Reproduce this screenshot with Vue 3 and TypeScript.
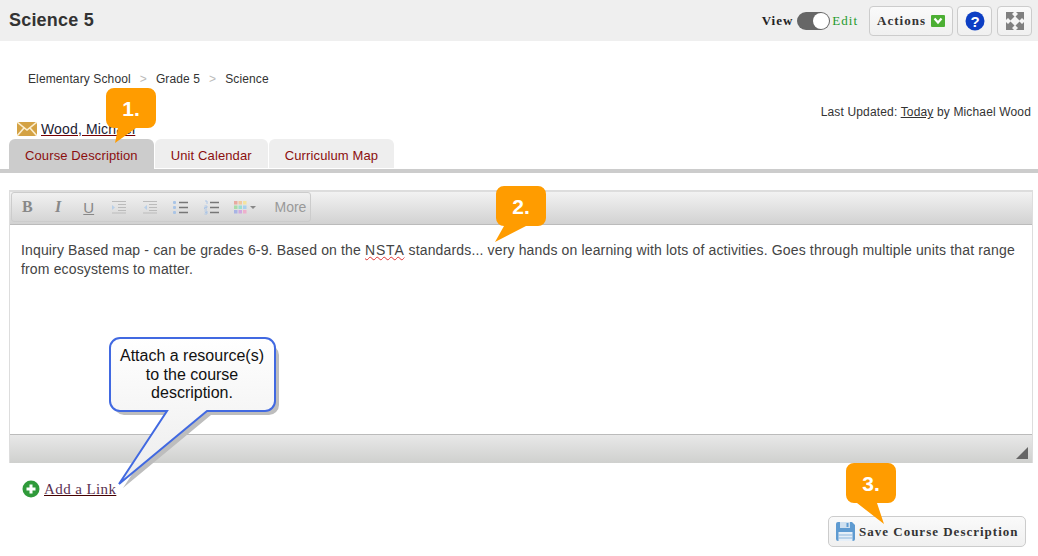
<script setup lang="ts">
const crumbs = ['Elementary School', 'Grade 5', 'Science']
const tabs = ['Course Description', 'Unit Calendar', 'Curriculum Map']
</script>

<template>
  <div class="page">
    <header class="topbar">
      <h1 class="title">Science 5</h1>
      <div class="controls">
        <span class="view-label">View</span>
        <span class="toggle"><span class="knob" /></span>
        <span class="edit-label">Edit</span>
        <button class="btn actions">
          Actions
          <svg width="14" height="12" viewBox="0 0 14 12">
            <rect width="14" height="12" rx="1" fill="#4caf33" />
            <path d="M3.5 3.5 7 7.5l3.5-4" fill="none" stroke="#fff" stroke-width="2.2" />
          </svg>
        </button>
        <button class="btn square">
          <svg width="20" height="20" viewBox="0 0 20 20">
            <circle cx="10" cy="10" r="9.5" fill="#0d3fc4" />
            <text x="10" y="15.5" class="help-mark" text-anchor="middle">?</text>
          </svg>
        </button>
        <button class="btn square expand">
          <svg width="18" height="18" viewBox="0 0 18 18" fill="#808080">
            <path d="M0 0h8L6 2l2.5 2.5-4 4L2 6 0 8z" />
            <path d="M18 0v8l-2-2-2.5 2.500-4-4L12 2l-2-2z" />
            <path d="M0 18v-8l2 2 2.500-2.500 4 4L6 16l2 2z" />
            <path d="M18 18h-8l2-2-2.500-2.500 4-4L16 12l2-2z" />
          </svg>
        </button>
      </div>
    </header>

    <nav class="crumbs">
      <template v-for="(crumb, i) in crumbs" :key="crumb">
        <span v-if="i" class="sep">&gt;</span>
        <span>{{ crumb }}</span>
      </template>
    </nav>

    <p class="updated">Last Updated: <u>Today</u> by Michael Wood</p>

    <div class="owner">
      <svg width="20" height="14" viewBox="0 0 20 14">
        <rect width="20" height="14" fill="#d4a244" />
        <path d="M0 0l10 8 10-8M0 14l7-8M20 14l-7-8" fill="none" stroke="#fbeed0" stroke-width="1.6" />
      </svg>
      <a class="owner-link">Wood, Michael</a>
    </div>

    <div class="tabs">
      <div v-for="(tab, i) in tabs" :key="tab" class="tab" :class="{ active: i === 0 }">{{ tab }}</div>
    </div>

    <section class="editor">
      <div class="toolbar">
        <div class="tool-group">
          <span class="tool glyph bold">B</span>
          <span class="tool glyph italic">I</span>
          <span class="tool glyph under">U</span>
          <span class="tool">
            <svg width="14" height="14" viewBox="0 0 14 14" stroke="#bbb" stroke-width="1.2" fill="none">
              <path d="M0 1.5h14M6 4.5h8M6 7.5h8M6 10.5h8M0 13h14" />
              <path d="M0 5l3 2.5-3 2.5z" fill="#b8cfe8" stroke="none" />
            </svg>
          </span>
          <span class="tool">
            <svg width="14" height="14" viewBox="0 0 14 14" stroke="#bbb" stroke-width="1.2" fill="none">
              <path d="M0 1.5h14M6 4.5h8M6 7.5h8M6 10.5h8M0 13h14" />
              <path d="M4 5 1 7.5 4 10z" fill="#b8cfe8" stroke="none" />
            </svg>
          </span>
          <span class="tool">
            <svg width="15" height="15" viewBox="0 0 15 15">
              <path d="M6 2.5h9M6 7.5h9M6 12.5h9" stroke="#777" stroke-width="1.3" />
              <g fill="#a9c4e6"><rect y="1" width="3" height="3" rx="1" /><rect y="6" width="3" height="3" rx="1" /><rect y="11" width="3" height="3" rx="1" /></g>
            </svg>
          </span>
          <span class="tool">
            <svg width="15" height="15" viewBox="0 0 15 15">
              <path d="M6 2.5h9M6 7.5h9M6 12.5h9" stroke="#777" stroke-width="1.3" />
              <path d="M1 1h2v3M.5 6h2.5v1.500h-2.500V9h2.500M.5 11h2.500v3h-2.500M1 12.500h2" fill="none" stroke="#a9c4e6" stroke-width=".9" />
            </svg>
          </span>
          <span class="tool color">
            <svg width="13" height="13" viewBox="0 0 13 13">
              <rect width="3.5" height="3.5" fill="#e8a9a0" /><rect x="4.5" width="3.5" height="3.5" fill="#f0c8a0" /><rect x="9" width="3.5" height="3.5" fill="#f4e4a0" />
              <rect y="4.5" width="3.5" height="3.5" fill="#a8dca8" /><rect x="4.5" y="4.5" width="3.5" height="3.5" fill="#9adfd0" /><rect x="9" y="4.5" width="3.5" height="3.5" fill="#a8d0ee" />
              <rect y="9" width="3.5" height="3.5" fill="#a8b4e4" /><rect x="4.5" y="9" width="3.5" height="3.5" fill="#d0a8e0" /><rect x="9" y="9" width="3.5" height="3.5" fill="#eeb0cc" />
            </svg>
            <i class="caret" />
          </span>
          <span class="more">More</span>
        </div>
      </div>
      <div class="content">
        Inquiry Based map - can be grades 6-9. Based on the <span class="spell">NSTA</span> standards... very hands on learning with lots of activities. Goes through multiple units that range from ecosystems to matter.
      </div>
      <div class="statusbar"><i class="grip" /></div>
    </section>

    <div class="add-link">
      <svg width="18" height="18" viewBox="0 0 18 18">
        <circle cx="9" cy="9" r="8.5" fill="#2f9a3a" />
        <path d="M9 4.5v9M4.5 9h9" stroke="#fff" stroke-width="3" />
      </svg>
      <a>Add a Link</a>
    </div>

    <div class="save-row">
      <button class="btn save">
        <svg width="19" height="19" viewBox="0 0 19 19">
          <path d="M2 0h14l3 3v14a2 2 0 0 1-2 2H2a2 2 0 0 1-2-2V2a2 2 0 0 1 2-2z" fill="#5f9bd1" />
          <rect x="4" y="0" width="10" height="6" fill="#cfe0f0" />
          <rect x="10.5" y="1" width="2" height="4" fill="#5f9bd1" />
          <rect x="2.5" y="10" width="14" height="9" fill="#e6eff8" />
          <path d="M2.5 13h14M2.5 16h14" stroke="#8db6dc" />
        </svg>
        Save Course Description
      </button>
    </div>

    <svg class="overlay" width="1038" height="556" viewBox="0 0 1038 556">
      <defs>
        <linearGradient id="note" x1="0" y1="0" x2="0" y2="1">
          <stop offset="0" stop-color="#ffffff" />
          <stop offset="1" stop-color="#ececec" />
        </linearGradient>
      </defs>
      <g fill="#ff9c00">
        <path d="M114 88h34a8 8 0 0 1 8 8v24a8 8 0 0 1-8 8h-12l-21 15 3-15h-4a8 8 0 0 1-8-8V96a8 8 0 0 1 8-8z" />
        <path d="M504 186h34a8 8 0 0 1 8 8v24a8 8 0 0 1-8 8h-12l-31 16 9-16h0a8 8 0 0 1-8-8v-24a8 8 0 0 1 8-8z" />
        <path d="M854 463h34a8 8 0 0 1 8 8v24a8 8 0 0 1-8 8h-11l7 21-27-21h-3a8 8 0 0 1-8-8v-24a8 8 0 0 1 8-8z" />
      </g>
      <g class="step" text-anchor="middle">
        <text x="131" y="116">1.</text>
        <text x="521" y="214">2.</text>
        <text x="871" y="491">3.</text>
      </g>
      <path
        d="M121 341h144a10 10 0 0 1 10 10v50a10 10 0 0 1-10 10h-58l-88 73 48-73h-47a10 10 0 0 1-10-10v-50a10 10 0 0 1 10-10z"
        transform="translate(4 4)"
        fill="#bdbdbd"
      />
      <path
        d="M120 338h145a10 10 0 0 1 10 10v53a10 10 0 0 1-10 10h-58l-88 73 48-73h-47a10 10 0 0 1-10-10v-53a10 10 0 0 1 10-10z"
        fill="url(#note)"
        stroke="#4169e1"
        stroke-width="2"
      />
      <g class="note-text" text-anchor="middle">
        <text x="192" y="361">Attach a resource(s)</text>
        <text x="192" y="380">to the course</text>
        <text x="192" y="398">description.</text>
      </g>
    </svg>
  </div>
</template>

<style>
body {
  background: #fff;
}
</style>

<style scoped>
.page {
  position: relative;
  height: 556px;
  overflow: hidden;
  font-family: "Liberation Sans", Arial, sans-serif;
  font-size: 12px;
  color: #333;
}

.topbar {
  display: flex;
  align-items: center;
  justify-content: space-between;
  height: 41px;
  padding: 0 6px 0 9px;
  background: #efefef;
}

.title {
  margin: 0;
  font-size: 18px;
  font-weight: 700;
  letter-spacing: .2px;
  color: #333;
}

.controls {
  display: flex;
  align-items: center;
}

.view-label,
.edit-label,
.actions,
.save {
  font-family: "Liberation Serif", serif;
  font-weight: 700;
  font-size: 13px;
  letter-spacing: 1px;
}

.view-label {
  color: #222;
  margin-right: 4px;
}

.edit-label {
  color: #1f9a2c;
  font-weight: 400;
  margin: 0 11px 0 2px;
}

.toggle {
  display: flex;
  justify-content: flex-end;
  width: 33px;
  height: 18px;
  border-radius: 9px;
  background: #666;
}

.knob {
  width: 16px;
  height: 16px;
  margin: 1px;
  border-radius: 50%;
  background: #fff;
}

.btn {
  display: flex;
  align-items: center;
  justify-content: center;
  padding: 0;
  border: 1px solid #ccc;
  border-radius: 4px;
  background: linear-gradient(#fafafa, #f0f0f0);
  color: #333;
}

.actions {
  gap: 5px;
  width: 84px;
  height: 30px;
}

.square {
  width: 35px;
  height: 30px;
  margin-left: 4px;
}

.expand {
  margin-left: 5px;
}

.help-mark {
  font: 700 15px "Liberation Sans", sans-serif;
  fill: #fff;
}

.crumbs {
  display: flex;
  gap: 9px;
  height: 15px;
  margin-top: 31px;
  padding-left: 28px;
  line-height: 15px;
  letter-spacing: .12px;
  color: #333;
}

.sep {
  color: #bbb;
}

.updated {
  height: 15px;
  margin: 18px 0 0;
  padding-right: 7px;
  line-height: 15px;
  letter-spacing: .15px;
  text-align: right;
}

.owner {
  display: flex;
  align-items: center;
  gap: 4px;
  height: 16px;
  margin: 1px 0 2px 17px;
}

.owner-link {
  font-size: 14px;
  letter-spacing: .15px;
  color: #223;
  text-decoration: underline;
  text-decoration-color: #700;
}

.tabs {
  display: flex;
  gap: 1px;
  height: 30px;
  padding-left: 9px;
  border-bottom: 4px solid #ccc;
  box-sizing: content-box;
}

.tab {
  height: 29px;
  padding: 0 16px;
  border-radius: 6px 6px 0 0;
  background: #eee;
  color: #8b0f0f;
  line-height: 34px;
  font-size: 13px;
  letter-spacing: .12px;
}

.tab.active {
  height: 30px;
  background: #ccc;
}

.editor {
  width: 1024px;
  margin: 17px 0 0 9px;
  border: 1px solid #ddd;
  border-top: 2px solid #ddd;
  border-bottom: 0;
  box-sizing: border-box;
}

.toolbar {
  height: 33px;
  padding: 0 1px;
  background: linear-gradient(#f2f2f2, #d2d2d2);
  border-bottom: 1px solid #bbb;
  box-sizing: border-box;
}

.tool-group {
  display: flex;
  align-items: center;
  width: 300px;
  height: 30px;
  border: 1px solid #ccc;
  border-radius: 3px;
  box-sizing: border-box;
}

.tool {
  display: flex;
  align-items: center;
  justify-content: center;
  width: 30.7px;
  flex: none;
}

.tool.color {
  gap: 3px;
  margin-left: 3px;
}

.glyph {
  color: #888;
  font-size: 16px;
}

.bold {
  font-family: "Liberation Serif", serif;
  font-weight: 700;
}

.italic {
  font-family: "Liberation Serif", serif;
  font-style: italic;
  font-weight: 700;
}

.under {
  font-size: 15px;
  text-decoration: underline;
}

.caret {
  border: 3px solid transparent;
  border-top: 3px solid #888;
  border-bottom: 0;
}

.more {
  margin-left: 14px;
  color: #999;
  font-size: 14px;
}

.content {
  height: 209px;
  padding: 16px 11px 0;
  box-sizing: border-box;
  font-size: 14px;
  line-height: 19px;
  letter-spacing: .15px;
  color: #444;
}

.spell {
  letter-spacing: .8px;
  text-decoration: underline wavy #d33 1px;
}

.statusbar {
  position: relative;
  height: 29px;
  border-top: 1px solid #bbb;
  background: linear-gradient(#e8e8e8, #cfd0ce);
  box-sizing: border-box;
}

.grip {
  position: absolute;
  right: 4px;
  bottom: 4px;
  border-style: solid;
  border-width: 0 0 12px 12px;
  border-color: transparent transparent #666 transparent;
}

.add-link {
  display: flex;
  align-items: center;
  gap: 4px;
  margin: 17px 0 0 22px;
  height: 18px;
}

.add-link a {
  font-family: "Liberation Serif", serif;
  font-size: 15px;
  letter-spacing: .4px;
  color: #5a3050;
  text-decoration: underline;
  text-decoration-color: #400;
}

.save-row {
  display: flex;
  justify-content: flex-end;
  margin-top: 18px;
  padding-right: 12px;
}

.save {
  justify-content: flex-start;
  gap: 4px;
  width: 198px;
  height: 31px;
  padding-left: 7px;
  font-size: 13px;
  letter-spacing: 1px;
  border-radius: 5px;
}

.overlay {
  position: absolute;
  top: 0;
  left: 0;
  pointer-events: none;
}

.step {
  font: 700 21px "Liberation Sans", sans-serif;
  fill: #fff;
}

.note-text {
  font: 400 16px "Liberation Sans", sans-serif;
  fill: #111;
}
</style>
